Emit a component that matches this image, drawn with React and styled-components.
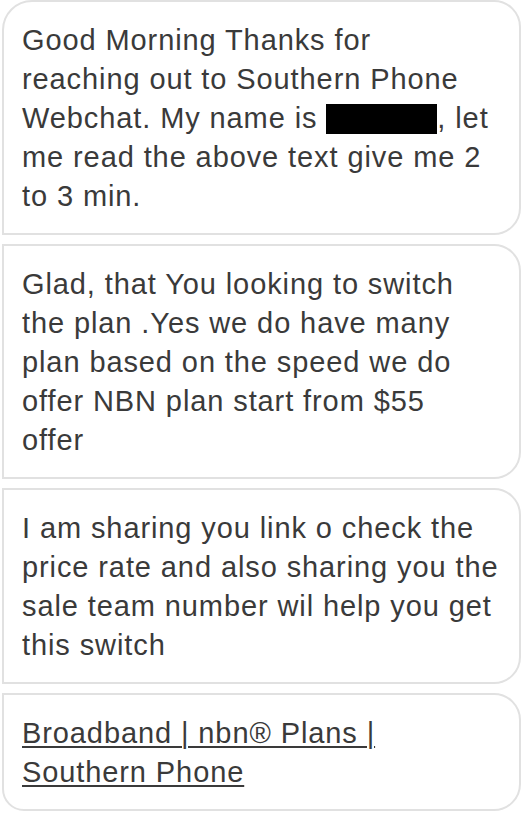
import React from "react";
import styled, { createGlobalStyle, css } from "styled-components";

const Global = createGlobalStyle`
  html, body { margin: 0; padding: 0; background: #ffffff; }
  body { font-family: "Liberation Sans", Arial, sans-serif; }
`;

const Thread = styled.div`
  display: flex;
  flex-direction: column;
  gap: 9px;
  padding: 0 3px 5px 2px;
  width: 524px;
  box-sizing: border-box;
`;

const shapes = {
  first: css`border-radius: 30px 27px 27px 0;`,
  middle: css`border-radius: 0 27px 27px 0;`,
  last: css`border-radius: 0 27px 27px 22px;`,
};

const Bubble = styled.div`
  box-sizing: border-box;
  border: 2px solid #e1e1e1;
  background: #ffffff;
  padding: 19px 12px 17px 18px;
  color: #3a3a3a;
  font-size: 29px;
  line-height: 39px;
  letter-spacing: 0.9px;
  white-space: nowrap;
  ${(p) => shapes[p.$shape]}
`;

const Redacted = styled.span`
  display: inline-block;
  width: 111px;
  height: 30px;
  background: #000000;
  vertical-align: -6px;
`;

const Link = styled.a`
  color: #3a3a3a;
  text-decoration: underline;
  text-decoration-thickness: 1.5px;
  text-underline-offset: 3px;
`;

export default function App() {
  return (
    <>
      <Global />
      <Thread>
        <Bubble $shape="first">
          Good Morning Thanks for<br />
          reaching out to Southern Phone<br />
          Webchat. My name is <Redacted />, let<br />
          me read the above text give me 2<br />
          to 3 min.
        </Bubble>
        <Bubble $shape="middle">
          Glad, that You looking to switch<br />
          the plan .Yes we do have many<br />
          plan based on the speed we do<br />
          offer NBN plan start from $55<br />
          offer
        </Bubble>
        <Bubble $shape="middle">
          I am sharing you link o check the<br />
          price rate and also sharing you the<br />
          sale team number wil help you get<br />
          this switch
        </Bubble>
        <Bubble $shape="last">
          <Link href="#">
            Broadband | nbn® Plans |<br />
            Southern Phone
          </Link>
        </Bubble>
      </Thread>
    </>
  );
}
